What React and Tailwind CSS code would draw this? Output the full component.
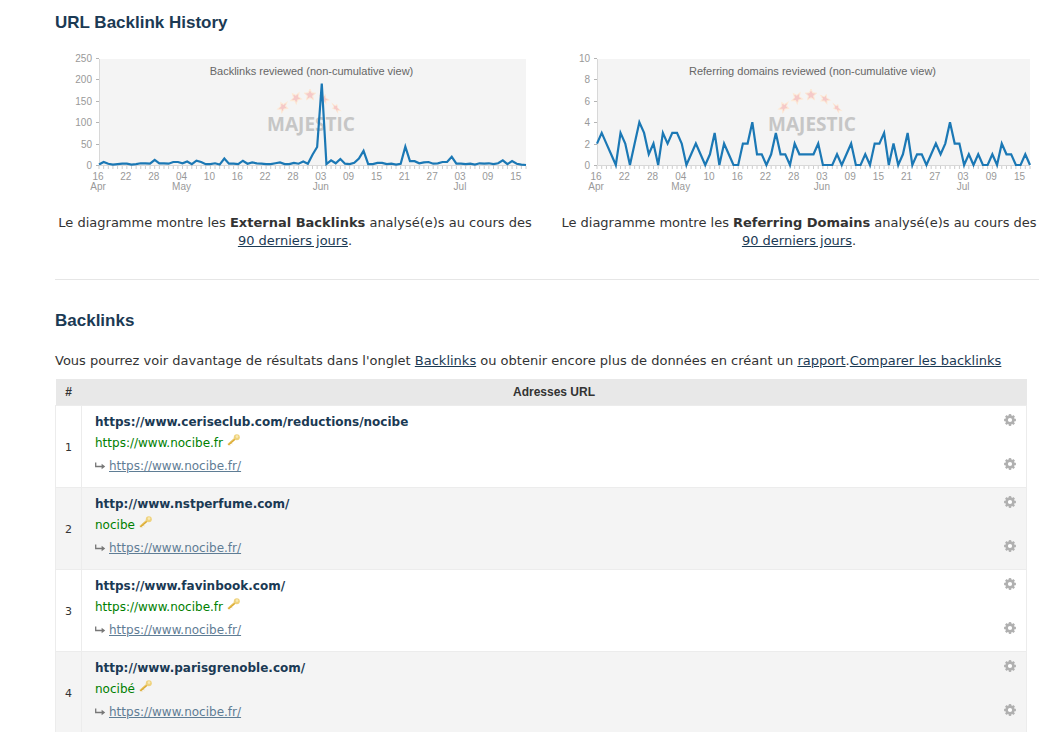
import React from 'react';

const PLOT_RIGHT = 471;
const PLOT_TOP = 9;
const PLOT_BOTTOM = 115;

const DAYS = ['16', '22', '28', '04', '10', '16', '22', '28', '03', '09', '15', '21', '27', '03', '09', '15'];
const MONTHS = { 0: 'Apr', 3: 'May', 8: 'Jun', 13: 'Jul' };

const BACKLINKS = [
  1, 7, 3, 1, 2, 3, 3, 1, 2, 4, 4, 3, 12, 4, 4, 3, 7, 7, 4, 8, 2, 10, 7, 2, 2, 4, 1, 15, 3, 3, 2, 10, 3, 6, 4, 3, 2,
  2, 4, 6, 2, 2, 5, 3, 8, 3, 24, 42, 190, 2, 11, 4, 14, 3, 2, 5, 15, 33, 2, 2, 5, 5, 2, 3, 1, 3, 43, 9, 9, 4, 6, 7,
  3, 4, 7, 7, 19, 3, 3, 2, 3, 1, 4, 3, 4, 2, 4, 11, 2, 9, 3, 1, 0,
];

const DOMAINS = [
  2, 3, 2, 1, 0, 3, 2, 0, 2, 4, 3, 1, 2, 0, 3, 2, 3, 3, 2, 0, 1, 2, 1, 0, 1, 3, 0, 2, 1, 0, 0, 2, 2, 4, 1, 1, 0, 1,
  3, 1, 1, 0, 2, 1, 1, 1, 1, 2, 0, 0, 0, 1, 0, 1, 2, 0, 0, 1, 0, 2, 2, 3, 0, 2, 0, 1, 3, 0, 1, 1, 0, 1, 2, 1, 2, 4,
  2, 2, 0, 1, 0, 1, 0, 0, 1, 0, 2, 1, 1, 0, 0, 1, 0,
];

const ROWS = [
  { url: 'https://www.ceriseclub.com/reductions/nocibe', anchor: 'https://www.nocibe.fr' },
  { url: 'http://www.nstperfume.com/', anchor: 'nocibe' },
  { url: 'https://www.favinbook.com/', anchor: 'https://www.nocibe.fr' },
  { url: 'http://www.parisgrenoble.com/', anchor: 'nocibé' },
];

/* The outer stars are flattened along the arc, as if seen from the side. */
const STARS = [
  { x: 0, y: 57, r: 6.4, flat: 0.75, turn: 40 },
  { x: 13, y: 48, r: 6.2, flat: 0.9, turn: 30 },
  { x: 27, y: 45, r: 6, flat: 1, turn: 0 },
  { x: 41, y: 49, r: 5.8, flat: 0.75, turn: -50 },
  { x: 53, y: 58, r: 6.2, flat: 0.5, turn: -40 },
];

function starPoints(r) {
  return Array.from({ length: 10 }, (_, i) => {
    const radius = i % 2 ? r * 0.45 : r;
    const t = ((i * 36 - 90) * Math.PI) / 180;
    return `${(radius * Math.cos(t)).toFixed(2)},${(radius * Math.sin(t)).toFixed(2)}`;
  }).join(' ');
}

function Watermark({ x }) {
  return (
    <g>
      {STARS.map((s, i) => (
        <polygon
          key={i}
          points={starPoints(s.r)}
          transform={`translate(${x + s.x} ${s.y}) rotate(${s.turn}) scale(${s.flat} 1)`}
          fill="#f5c9c8"
          stroke="#fdead6"
          strokeWidth="1"
        />
      ))}
      <text
        x={x + 28}
        y="81"
        textAnchor="middle"
        fill="#c6c6c6"
        className="font-['Open_Sans',sans-serif] text-[19px] font-bold"
      >
        MAJESTIC
      </text>
    </g>
  );
}

function Chart({ title, data, max, step, left, mark }) {
  const dx = (PLOT_RIGHT - left) / (data.length - 1);
  const px = (i) => left + i * dx;
  const py = (v) => PLOT_BOTTOM - (v / max) * (PLOT_BOTTOM - PLOT_TOP + 1);
  const yLabels = [];
  for (let v = 0; v <= max; v += step) yLabels.push(v);
  return (
    <svg
      viewBox="0 0 480 150"
      role="img"
      aria-label={title}
      className="block w-full font-['Liberation_Sans',Arial,sans-serif] text-[10px]"
    >
      <rect x={left} y={PLOT_TOP} width={PLOT_RIGHT - left} height={PLOT_BOTTOM - PLOT_TOP} fill="#f4f4f4" />
      <Watermark x={mark} />
      <text x={(left + PLOT_RIGHT) / 2 - 1} y="25" textAnchor="middle" fill="#666" className="text-[11px]">
        {title}
      </text>
      <path d={`M${left + 0.5} ${PLOT_TOP}V${PLOT_BOTTOM + 0.5}H${PLOT_RIGHT}`} fill="none" stroke="#d8d8d8" />
      {yLabels.map((v) => (
        <g key={v}>
          <path d={`M${left - 3} ${Math.round(py(v)) + 0.5}h3`} stroke="#b4b4b4" />
          <text x={left - 7} y={py(v) + 4} textAnchor="end" fill="#999">
            {v}
          </text>
        </g>
      ))}
      {data.map((_, i) => (
        <path key={i} d={`M${px(i)} ${PLOT_BOTTOM + 1}v3`} stroke="#ccc" />
      ))}
      {DAYS.map((d, i) => (
        <g key={i} fill="#999" textAnchor="middle">
          <text x={px(i * 6) - 1} y="130">
            {d}
          </text>
          {MONTHS[i] && (
            <text x={px(i * 6) - 1} y="140">
              {MONTHS[i]}
            </text>
          )}
        </g>
      ))}
      <polyline
        points={data.map((v, i) => `${px(i).toFixed(2)},${py(v).toFixed(2)}`).join(' ')}
        fill="none"
        stroke="#1b78b5"
        strokeWidth="2.2"
      />
    </svg>
  );
}

function ChartPanel({ subject, ...chart }) {
  return (
    <div>
      <Chart {...chart} />
      <p className="mt-3.5 text-center">
        Le diagramme montre les <strong>{subject}</strong> analysé(e)s au cours des{' '}
        <a href="#periode" className="whitespace-nowrap text-[#1b3a54] underline">
          90 derniers jours
        </a>
        .
      </p>
    </div>
  );
}

function Gear() {
  return (
    <svg viewBox="0 0 12 12" className="size-3" aria-hidden="true">
      <g fill="#b0b0b0">
        {[0, 45, 90, 135].map((a) => (
          <rect key={a} x="4.8" y="0.1" width="2.4" height="11.8" transform={`rotate(${a} 6 6)`} />
        ))}
      </g>
      <circle cx="6" cy="6" r="3.4" fill="#fff" stroke="#b0b0b0" strokeWidth="2.6" />
    </svg>
  );
}

function Key() {
  return (
    <svg viewBox="0 0 14 12" className="h-3 w-3.5" aria-hidden="true">
      <path d="M1.2 10.8L9 4" stroke="#dba92f" strokeWidth="2.1" fill="none" />
      <path d="M1 10L8 3.9" stroke="#f3d98a" strokeWidth="0.8" fill="none" />
      <path d="M2.2 10.4l1 .9M4.2 8.8l1 .9" stroke="#dfb650" strokeWidth="1" />
      <circle cx="9.8" cy="3.2" r="3" fill="#efd27c" />
      <circle cx="10" cy="2.6" r="1.3" fill="#f8e9b4" />
    </svg>
  );
}

function Arrow() {
  return (
    <svg viewBox="0 0 11 8" className="h-2 w-[11px]" aria-hidden="true">
      <path d="M.7 .5V4.5H8" fill="none" stroke="#777" strokeWidth="1.3" />
      <path d="M6.6 1.7L10.2 4.5L6.6 7.3Z" fill="#777" />
    </svg>
  );
}

export default function App() {
  return (
    <main className="bg-white pt-[13px] pr-[23px] pl-[55px] font-['DejaVu_Sans',Verdana,sans-serif] text-[13px] leading-[18px] text-[#333]">
      <h2 className="font-['Liberation_Sans',Arial,sans-serif] text-[17px] leading-5 font-bold text-[#1b3a54]">
        URL Backlink History
      </h2>
      <div className="mt-[17px] grid grid-cols-2 gap-6">
        <ChartPanel
          title="Backlinks reviewed (non-cumulative view)"
          subject="External Backlinks"
          data={BACKLINKS}
          max={250}
          step={50}
          left={44}
          mark={228}
        />
        <ChartPanel
          title="Referring domains reviewed (non-cumulative view)"
          subject="Referring Domains"
          data={DOMAINS}
          max={10}
          step={2}
          left={38}
          mark={225}
        />
      </div>
      <hr className="mt-[29px] border-[#e6e6e6]" />
      <h2 className="mt-[31px] font-['Liberation_Sans',Arial,sans-serif] text-[17px] leading-5 font-bold text-[#1b3a54]">
        Backlinks
      </h2>
      <p className="mt-[21px]">
        Vous pourrez voir davantage de résultats dans l'onglet{' '}
        <a href="#backlinks" className="text-[#1b3a54] underline">
          Backlinks
        </a>{' '}
        ou obtenir encore plus de données en créant un{' '}
        <a href="#rapport" className="text-[#1b3a54] underline">
          rapport
        </a>
        .
        <a href="#comparer" className="text-[#1b3a54] underline">
          Comparer les backlinks
        </a>
      </p>
      <div className="mt-[9px] pr-3">
        <table className="w-full border-collapse text-[12px]">
          <thead>
            <tr className="h-[26px] bg-[#e8e8e8] font-['Liberation_Sans',Arial,sans-serif] text-[#333]">
              <th className="w-[26px] font-bold">#</th>
              <th colSpan={2} className="font-bold">
                Adresses URL
              </th>
            </tr>
          </thead>
          <tbody>
            {ROWS.map((row, i) => (
              <tr key={row.url} className="h-[82px] border border-[#ececec] even:bg-[#f4f4f4]">
                <td className="border-r border-[#ececec] pt-1 text-center text-[11px]">{i + 1}</td>
                <td className="pt-[7px] pl-[13px] align-top">
                  <a href={row.url} className="block font-bold text-[#1b3a54]">
                    {row.url}
                  </a>
                  <div className="mt-[3px] flex gap-1 text-[#008000]">
                    {row.anchor}
                    <Key />
                  </div>
                  <div className="mt-[5px] flex items-center gap-[3px]">
                    <Arrow />
                    <a href="https://www.nocibe.fr/" className="text-[#5f7d95] underline">
                      https://www.nocibe.fr/
                    </a>
                  </div>
                </td>
                <td className="w-8 pt-2 align-top">
                  <div className="flex flex-col items-center gap-8">
                    <button type="button" aria-label="Options de la page source">
                      <Gear />
                    </button>
                    <button type="button" aria-label="Options de la page cible">
                      <Gear />
                    </button>
                  </div>
                </td>
              </tr>
            ))}
          </tbody>
        </table>
      </div>
    </main>
  );
}
